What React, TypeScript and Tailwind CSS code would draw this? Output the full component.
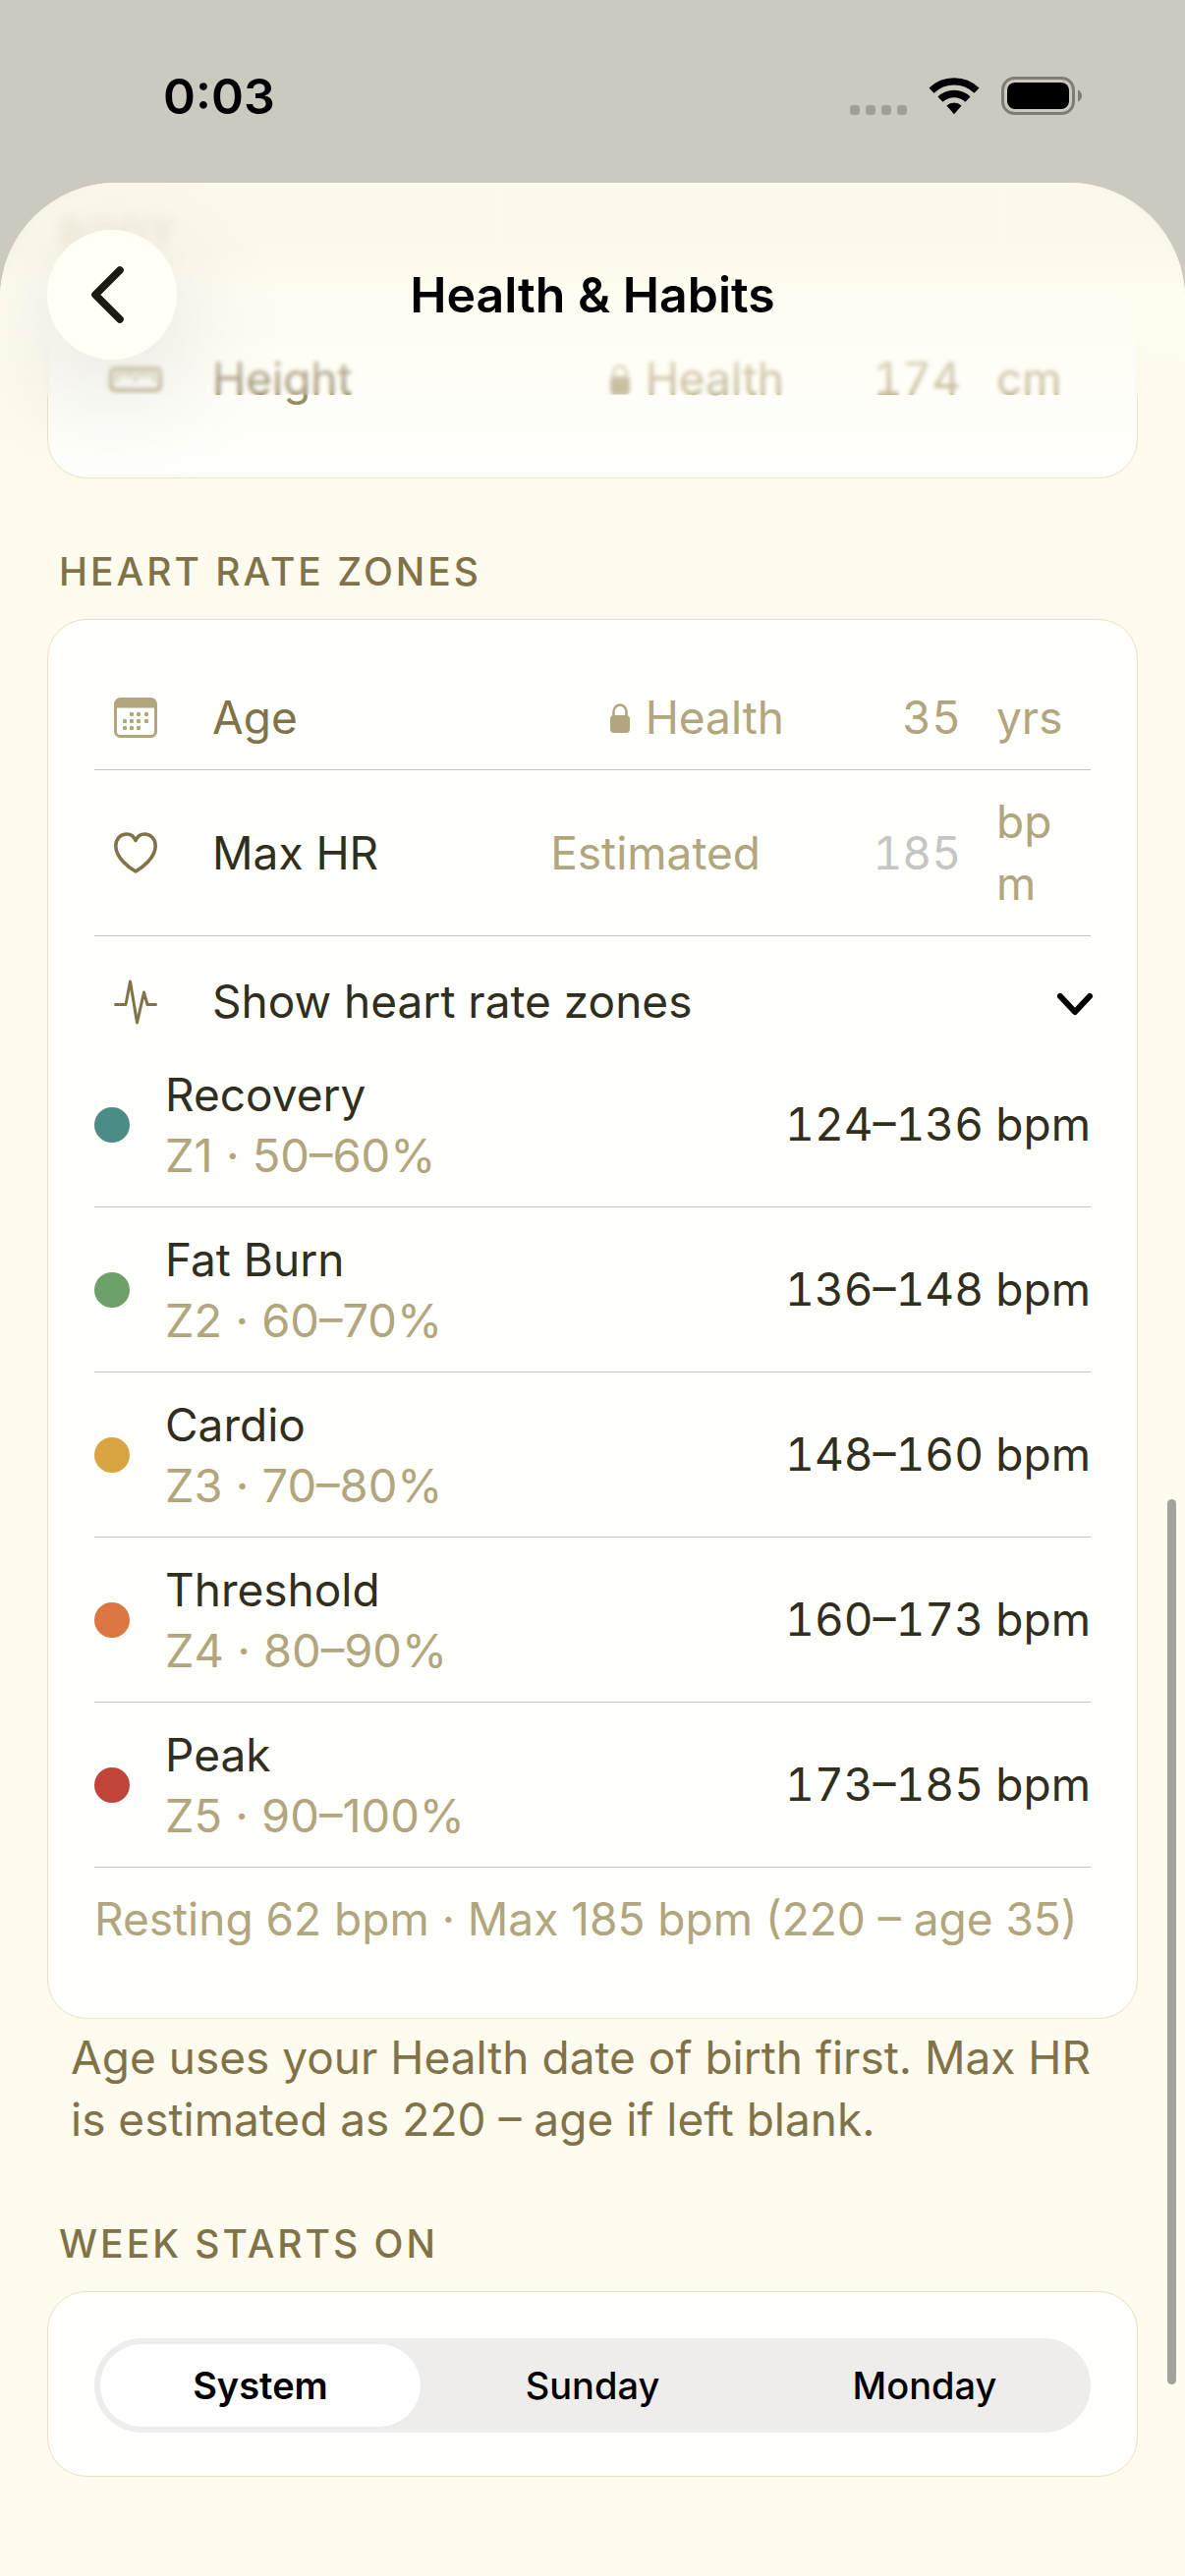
import { useState, type ReactNode } from 'react'
import clsx from 'clsx'

interface Zone {
  name: string
  detail: string
  range: string
  dot: string
}

const zones: Zone[] = [
  { name: 'Recovery', detail: 'Z1 · 50–60%', range: '124–136 bpm', dot: 'bg-[#4d8b86]' },
  { name: 'Fat Burn', detail: 'Z2 · 60–70%', range: '136–148 bpm', dot: 'bg-[#6fa06a]' },
  { name: 'Cardio', detail: 'Z3 · 70–80%', range: '148–160 bpm', dot: 'bg-[#d9a441]' },
  { name: 'Threshold', detail: 'Z4 · 80–90%', range: '160–173 bpm', dot: 'bg-[#dc7642]' },
  { name: 'Peak', detail: 'Z5 · 90–100%', range: '173–185 bpm', dot: 'bg-[#c0443a]' },
]

const weekStarts = ['System', 'Sunday', 'Monday']

function WifiIcon() {
  return (
    <svg width="52" height="38" viewBox="0 0 52 38" fill="none" stroke="#000" strokeWidth="7.4" aria-hidden="true">
      <path d="M3 13.200a33 33 0 0 1 46 0" />
      <path d="M12 22.200a20 20 0 0 1 28 0" />
      <path d="M18.400 28.600a11 11 0 0 1 15.200 0L26 37.200z" fill="#000" stroke="none" />
    </svg>
  )
}

function BatteryIcon() {
  return (
    <svg width="82" height="40" viewBox="0 0 82 40" fill="none" aria-hidden="true">
      <rect x="1.5" y="1.5" width="72" height="36" rx="12" stroke="#7f7d74" strokeWidth="3" />
      <rect x="6" y="6" width="63" height="27" rx="8" fill="#000" />
      <path d="M78 13.500c2.500 1 4 3.400 4 6s-1.500 5-4 6z" fill="#7f7d74" />
    </svg>
  )
}

function RulerIcon() {
  return (
    <svg width="54" height="26" viewBox="0 0 54 26" fill="none" stroke="#b1a67e" aria-hidden="true">
      <rect x="2" y="2" width="50" height="22" rx="4" strokeWidth="4" />
      <path d="M8 3v13M13 3v8M18 3v8M22 3v8M27 3v13M32 3v8M36 3v8M41 3v8M46 3v13" strokeWidth="2" />
    </svg>
  )
}

function CalendarIcon() {
  const dots = [
    [18, 17], [25, 17], [33, 17],
    [11, 24], [18, 24], [25, 24], [33, 24],
    [11, 31], [18, 31], [25, 31],
  ]
  return (
    <svg width="44" height="41" viewBox="0 0 44 41" fill="none" aria-hidden="true">
      <rect x="1.5" y="1.5" width="41" height="38" rx="5" stroke="#b1a67e" strokeWidth="3" />
      <path d="M1 10.500V6a5 5 0 0 1 5-5h32a5 5 0 0 1 5 5v4.500z" fill="#b1a67e" />
      {dots.map(([x, y]) => (
        <rect key={`${x}-${y}`} x={x - 2} y={y - 2} width="4" height="4" rx="1" fill="#b1a67e" />
      ))}
    </svg>
  )
}

function HeartIcon() {
  return (
    <svg width="44" height="42" viewBox="0 0 44 42" fill="none" stroke="#80734a" strokeWidth="3.6" strokeLinejoin="round" aria-hidden="true">
      <path d="M22 40C15 36 1.800 26 1.800 14 1.800 7 6.500 2 12.800 2c4 0 7.400 2.400 9.200 6.400C23.800 4.400 27.200 2 31.200 2 37.500 2 42.200 7 42.200 14 42.200 26 29 36 22 40z" />
    </svg>
  )
}

function PulseIcon() {
  return (
    <svg width="44" height="46" viewBox="0 0 44 46" fill="none" stroke="#80734a" strokeWidth="3" strokeLinecap="round" strokeLinejoin="round" aria-hidden="true">
      <path d="M1.500 25.500h10.500L16.500 2l7 42 7-31 3.500 12.500h8.500" />
    </svg>
  )
}

function LockIcon() {
  return (
    <svg width="20" height="30" viewBox="0 0 20 30" fill="none" aria-hidden="true">
      <rect y="12" width="20" height="18" rx="4" fill="#b1a67e" />
      <path d="M3.500 14V8.500a6.500 7 0 0 1 13 0V14" stroke="#b1a67e" strokeWidth="2.5" />
    </svg>
  )
}

function Section({ title, children }: { title: string; children: ReactNode }) {
  return (
    <section>
      <h2 className="mb-6 px-3 text-[39px] leading-[48px] font-medium tracking-[3px] text-[#80734a] uppercase">
        {title}
      </h2>
      {children}
    </section>
  )
}

function Card({ className = 'pb-12', children }: { className?: string; children: ReactNode }) {
  return (
    <div className={clsx('rounded-[40px] border border-[#e9e1c4] bg-[#fffffb] px-[47px] pt-[47px]', className)}>
      {children}
    </div>
  )
}

function IconSlot({ children }: { children: ReactNode }) {
  return <span className="flex w-[84px] shrink-0 justify-center">{children}</span>
}

function LockedRow({ icon, label, value, unit }: { icon: ReactNode; label: string; value: string; unit: string }) {
  return (
    <div className="flex items-center gap-9 py-[21px] pr-6">
      <IconSlot>{icon}</IconSlot>
      <span className="flex-1 text-[#80734a]">{label}</span>
      <div className="flex items-center text-[#b1a67e]">
        <LockIcon />
        <span className="ml-4">Health</span>
        <span className="w-[180px] text-right tabular-nums">{value}</span>
      </div>
      <span className="w-[72px] text-[#b1a67e]">{unit}</span>
    </div>
  )
}

export default function App() {
  const [maxHr, setMaxHr] = useState('')
  const [showZones, setShowZones] = useState(true)
  const [weekStart, setWeekStart] = useState('System')

  return (
    <div className="flex min-h-screen flex-col bg-[#cccabe] font-['Inter',sans-serif] text-[46px] leading-[63px] text-[#302f1f]">
      <div className="flex h-[186px] items-center justify-between pt-[10px] pr-[105px] pl-[166px] text-black">
        <span className="text-[50px] font-semibold">0:03</span>
        <div className="flex items-center">
          <div className="mt-7 mr-[22px] flex gap-[6px]">
            {[0, 1, 2, 3].map((i) => (
              <span key={i} className="size-[10px] rounded-[3px] bg-[#a2a096]" />
            ))}
          </div>
          <WifiIcon />
          <span className="ml-[22px]">
            <BatteryIcon />
          </span>
        </div>
      </div>

      <div className="relative flex-1 overflow-hidden rounded-t-[118px] bg-[#fffbee]">
        <main className="flex flex-col gap-[71px] px-12 pt-[27px] pb-20">
          <Section title="Body">
            <Card>
              <LockedRow icon={<RulerIcon />} label="Height" value="174" unit="cm" />
            </Card>
          </Section>

          <Section title="Heart rate zones">
            <Card>
              <div className="border-b border-[#c4c4c0]">
                <LockedRow icon={<CalendarIcon />} label="Age" value="35" unit="yrs" />
              </div>

              <div className="flex items-center gap-9 border-b border-[#c4c4c0] py-[21px] pr-6">
                <IconSlot>
                  <HeartIcon />
                </IconSlot>
                <label htmlFor="max-hr" className="flex-1">
                  Max HR
                </label>
                <div className="flex items-center">
                  <span className="text-[#b1a67e]">Estimated</span>
                  <input
                    id="max-hr"
                    inputMode="numeric"
                    value={maxHr}
                    onChange={(e) => setMaxHr(e.target.value)}
                    placeholder="185"
                    className="w-[204px] bg-transparent text-right tabular-nums outline-none placeholder:text-[#c5c5c5]"
                  />
                </div>
                <span className="w-[72px] break-all text-[#b1a67e]">bpm</span>
              </div>

              <button
                type="button"
                aria-expanded={showZones}
                onClick={() => setShowZones(!showZones)}
                className="flex w-full items-center gap-9 pt-[35px] pb-[10px] text-left"
              >
                <IconSlot>
                  <PulseIcon />
                </IconSlot>
                <span className="flex-1">Show heart rate zones</span>
                <svg width="38" height="28" viewBox="0 0 38 28" fill="none" stroke="#000" strokeWidth="6" strokeLinecap="round" strokeLinejoin="round" className="overflow-visible" aria-hidden="true">
                  <path d="M7 8l15 16L37 8" />
                </svg>
              </button>

              {showZones && (
                <ul>
                  {zones.map((zone) => (
                    <li key={zone.name} className="flex min-h-[168px] items-center gap-9 border-b border-[#c4c4c0]">
                      <span className={clsx('size-9 shrink-0 rounded-full', zone.dot)} />
                      <div className="flex-1 leading-[61px]">
                        <p>{zone.name}</p>
                        <p className="text-[47px] text-[#b1a67e]">{zone.detail}</p>
                      </div>
                      <span className="tabular-nums">{zone.range}</span>
                    </li>
                  ))}
                </ul>
              )}
              <p className="py-[21px] whitespace-nowrap text-[#b1a67e]">Resting 62 bpm · Max 185 bpm (220 – age 35)</p>
            </Card>
            <p className="mt-2 px-6 text-[#80734a]">
              Age uses your Health date of birth first. Max HR is estimated as 220 – age if left blank.
            </p>
          </Section>

          <Section title="Week starts on">
            <Card className="pb-11">
              <div role="radiogroup" aria-label="Week starts on" className="grid grid-cols-3 rounded-full bg-[#eeedeb] text-[38px] leading-[84px] text-black">
                {weekStarts.map((day) => (
                  <label key={day} className="relative p-[6px] text-center">
                    <input
                      type="radio"
                      name="week-start"
                      value={day}
                      checked={weekStart === day}
                      onChange={() => setWeekStart(day)}
                      className="peer absolute inset-0 cursor-pointer appearance-none"
                    />
                    <span className="relative block rounded-full font-medium peer-checked:bg-white peer-checked:font-semibold">
                      {day}
                    </span>
                  </label>
                ))}
              </div>
            </Card>
          </Section>
        </main>

        <div className="pointer-events-none absolute inset-x-0 top-0 h-[130px] backdrop-blur-[6px]" />
        <div className="pointer-events-none absolute inset-x-0 top-[130px] h-[86px] backdrop-blur-[2px]" />
        <div className="pointer-events-none absolute inset-x-0 top-0 h-[280px] bg-[linear-gradient(to_bottom,#fcf8ebdc_0px,#fcf8ebdc_65px,#fffcf0f0_110px,#fffcf0f0_135px,#fffcf0a0_170px,#fffcf050_205px,#fffcf020_235px,#fffcf000_280px)]" />
        <header className="absolute inset-x-0 top-12 grid h-[132px] grid-cols-[132px_1fr_132px] items-center px-12">
          <button
            type="button"
            aria-label="Back"
            className="flex size-[132px] items-center justify-center rounded-full bg-[#fffff4] pr-2 shadow-[0_30px_120px_rgba(90,90,110,0.2)]"
          >
            <svg width="36" height="60" viewBox="0 0 36 60" fill="none" stroke="#1d1b10" strokeWidth="7.6" strokeLinecap="round" strokeLinejoin="round" aria-hidden="true">
              <path d="M30 5L5 30l25 25" />
            </svg>
          </button>
          <h1 className="text-center text-[50px] font-semibold text-black">Health &amp; Habits</h1>
        </header>
        <div className="absolute top-[1340px] right-[9px] h-[901px] w-[9px] rounded-full bg-[#a5a29b]" />
      </div>
    </div>
  )
}
